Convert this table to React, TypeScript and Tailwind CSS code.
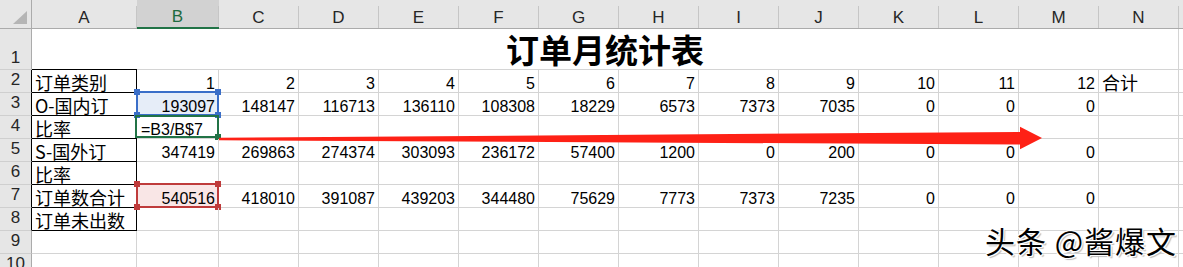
import React from 'react';

type Sel = 'blue' | 'green' | 'red' | undefined;

const LETTERS = ['C', 'D', 'E', 'F', 'G', 'H', 'I', 'J', 'K', 'L', 'M', 'N'];

const ROWS: { n: number; a?: string; v?: (number | string)[]; last?: string }[] = [
  { n: 2, a: '订单类别', v: [1, 2, 3, 4, 5, 6, 7, 8, 9, 10, 11, 12], last: '合计' },
  { n: 3, a: 'O-国内订', v: [193097, 148147, 116713, 136110, 108308, 18229, 6573, 7373, 7035, 0, 0, 0] },
  { n: 4, a: '比率' },
  { n: 5, a: 'S-国外订', v: [347419, 269863, 274374, 303093, 236172, 57400, 1200, 0, 200, 0, 0, 0] },
  { n: 6, a: '比率' },
  { n: 7, a: '订单数合计', v: [540516, 418010, 391087, 439203, 344480, 75629, 7773, 7373, 7235, 0, 0, 0] },
  { n: 8, a: '订单未出数' },
  { n: 9 },
  { n: 10 },
];

const num = "font-['Liberation_Sans','Noto_Sans_CJK_SC',sans-serif] text-[16px] leading-none";
const cjk = "font-['Noto_Sans_CJK_SC',sans-serif] text-[18px] leading-none";

function RowHead({ n, dark, tall }: { n: number; dark?: boolean; tall?: boolean }) {
  return (
    <div
      className={`w-[32px] shrink-0 flex items-end justify-center bg-[#e6e6e6] border-b border-b-[#cfcfcf] border-r ${
        dark ? 'border-r-black' : 'border-r-[#ababab]'
      } ${tall ? 'pb-[3px]' : 'pb-[4px]'} font-['Liberation_Sans',sans-serif] text-[17px] leading-none text-[#262626]`}
    >
      {n}
    </div>
  );
}

function Handle({ pos, color }: { pos: string; color: string }) {
  return <div className={`absolute w-[6px] h-[6px] ${pos} ${color}`} />;
}

function Selection({ sel }: { sel: Sel }) {
  if (sel === 'blue')
    return (
      <div className="absolute -left-[1px] -top-[2px] -right-[1px] -bottom-[1px] border-2 border-[#3a6ec8]">
        <Handle pos="-left-[4px] -top-[4px]" color="bg-[#3a6ec8]" />
        <Handle pos="-right-[4px] -top-[4px]" color="bg-[#3a6ec8]" />
        <Handle pos="-left-[4px] -bottom-[4px]" color="bg-[#3a6ec8]" />
        <Handle pos="-right-[4px] -bottom-[4px]" color="bg-[#3a6ec8]" />
      </div>
    );
  if (sel === 'red')
    return (
      <div className="absolute -left-[1px] -top-[2px] -right-[1px] -bottom-[1px] border-2 border-[#bf3b3b]">
        <Handle pos="-left-[4px] -top-[4px]" color="bg-[#bf3b3b]" />
        <Handle pos="-right-[4px] -top-[4px]" color="bg-[#bf3b3b]" />
        <Handle pos="-left-[4px] -bottom-[4px]" color="bg-[#bf3b3b]" />
        <Handle pos="-right-[4px] -bottom-[4px]" color="bg-[#bf3b3b]" />
      </div>
    );
  if (sel === 'green')
    return (
      <div className="absolute -left-[2px] -top-[1px] -right-[1px] bottom-0 border-2 border-[#217346]">
        <div className="absolute -right-[4px] -bottom-[4px] w-[6px] h-[6px] bg-[#217346]" />
      </div>
    );
  return null;
}

export default function App() {
  return (
    <div className="relative w-[1183px] h-[267px] overflow-hidden bg-white text-black">
      {/* column headers */}
      <div className="flex h-[29px] bg-[#e6e6e6]">
        <div className="w-[32px] shrink-0 border-r border-b border-[#ababab] flex items-end justify-end pr-[4px] pb-[4px]">
          <svg width="14" height="13" viewBox="0 0 14 13">
            <polygon points="14,0 14,13 0,13" fill="#b5b5b5" />
          </svg>
        </div>
        {['A', 'B', ...LETTERS].map((l) => (
          <div
            key={l}
            className={`${l === 'A' ? 'w-[105px]' : l === 'B' ? 'w-[82px]' : 'w-[80px]'} shrink-0 pt-[6px] ${
              l === 'B' ? 'bg-[#d2d2d2] border-b-2 border-[#217346] text-[#1e6b41]' : 'border-b border-[#ababab] text-[#262626]'
            }`}
          >
            <div className="h-full border-r border-[#c6c6c6] flex items-center justify-center font-['Liberation_Sans',sans-serif] text-[17px] leading-none">
              {l}
            </div>
          </div>
        ))}
        <div className="flex-1 border-b border-[#ababab]" />
      </div>

      {/* row 1: merged title */}
      <div className="flex h-[41px]">
        <RowHead n={1} tall />
        <div className="w-[1147px] shrink-0 border-r border-b border-[#d4d4d4] flex items-end justify-center pb-[3px]">
          <span className="font-['Noto_Sans_CJK_SC',sans-serif] font-bold text-[33px] leading-none">订单月统计表</span>
        </div>
        <div className="flex-1 border-b border-[#d4d4d4]" />
      </div>

      {ROWS.map((r) => {
        const boxed = r.n >= 2 && r.n <= 8;
        const sel: Sel = r.n === 3 ? 'blue' : r.n === 4 ? 'green' : r.n === 7 ? 'red' : undefined;
        return (
          <div key={r.n} className="flex h-[23px]">
            <RowHead n={r.n} dark={boxed} />
            <div
              className={`w-[105px] shrink-0 border-r border-b flex items-end pl-[3px] pb-[1px] ${cjk} ${
                boxed ? 'border-black' : 'border-[#d4d4d4]'
              } ${r.n === 2 ? 'shadow-[0_-1px_0_#000]' : ''}`}
            >
              {r.a}
            </div>
            <div
              className={`relative w-[82px] shrink-0 border-r border-b border-[#d4d4d4] flex items-end ${
                r.n === 4 ? 'justify-start pl-[4px]' : 'justify-end pr-[3px]'
              } ${num} ${sel === 'blue' ? 'bg-[#e6edf8]' : sel === 'red' ? 'bg-[#f9e6e6]' : ''}`}
            >
              {r.n === 4 ? '=B3/B$7' : r.v ? r.v[0] : ''}
              <Selection sel={sel} />
            </div>
            {LETTERS.map((l, i) => (
              <div
                key={l}
                className={`w-[80px] shrink-0 border-r border-b border-[#d4d4d4] flex items-end ${
                  l === 'N' ? `justify-start pl-[3px] pb-[1px] ${cjk}` : `justify-end pr-[3px] ${num}`
                }`}
              >
                {l === 'N' ? r.last : r.v && i + 1 < r.v.length ? r.v[i + 1] : ''}
              </div>
            ))}
            <div className="flex-1 border-b border-[#d4d4d4]" />
          </div>
        );
      })}

      {/* hand-drawn red arrow */}
      <svg className="absolute left-0 top-0 pointer-events-none" width="1183" height="267">
        <polygon
          points="219,137.8 1020,132 1020,126.7 1042,138 1020,149.3 1020,144.5 219,140.2"
          fill="#fe2116"
        />
      </svg>

      {/* watermark */}
      <div className="absolute left-[985px] top-[225px] font-['Noto_Sans_CJK_SC',sans-serif] text-[30px] tracking-[1px] leading-none text-black whitespace-nowrap [text-shadow:1px_1px_0_#fff,-1px_-1px_0_#fff,1px_-1px_0_#fff,-1px_1px_0_#fff,2px_2px_1px_#bbb]">
        头条 @酱爆文
      </div>
    </div>
  );
}
